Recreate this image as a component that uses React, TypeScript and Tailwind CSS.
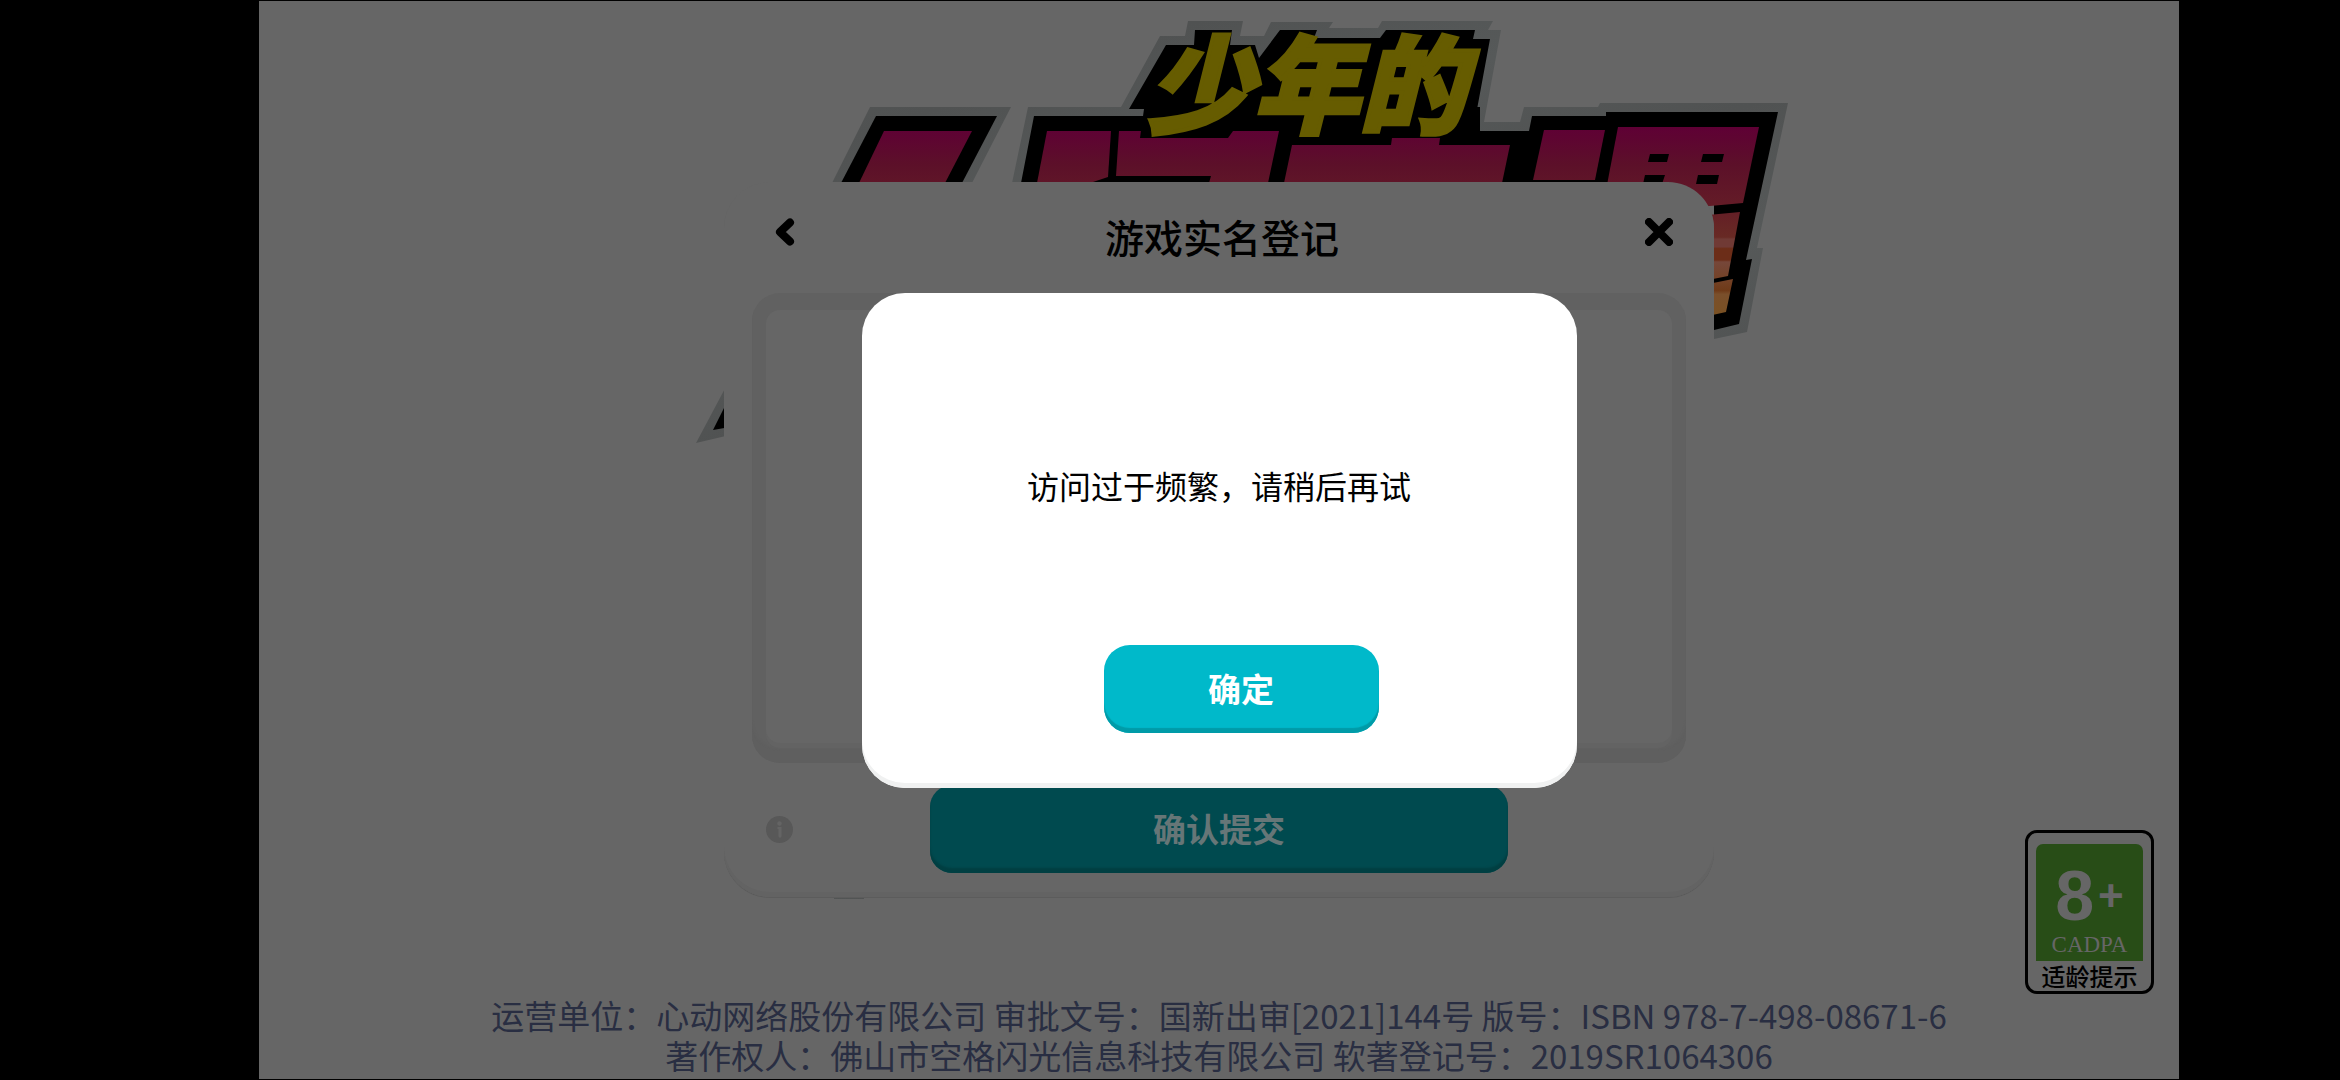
import React from "react";

const CJK = "font-['Noto_Sans_CJK_SC',sans-serif]";

function GameLogo() {
  return (
    <svg
      aria-label="少年的人间奇遇"
      role="img"
      viewBox="619 0 1200 920"
      className="absolute top-0 left-1/2 -ml-[600px] h-[920px] w-[1200px]"
    >
      <defs>
        <linearGradient id="rim" gradientUnits="userSpaceOnUse" x1="0" y1="20" x2="40" y2="140" spreadMethod="reflect">
          <stop offset="0" stopColor="#565959" />
          <stop offset="1" stopColor="#505252" />
        </linearGradient>
        <linearGradient id="sunset" gradientUnits="userSpaceOnUse" x1="0" y1="126" x2="0" y2="316">
          <stop offset="0" stopColor="#5f0035" />
          <stop offset="0.2" stopColor="#5c1029" />
          <stop offset="0.4" stopColor="#631b27" />
          <stop offset="0.58" stopColor="#682a24" />
          <stop offset="0.59" stopColor="#703a35" />
          <stop offset="0.63" stopColor="#703a35" />
          <stop offset="0.64" stopColor="#6c2d18" />
          <stop offset="0.7" stopColor="#6c2d18" />
          <stop offset="0.71" stopColor="#76473a" />
          <stop offset="0.8" stopColor="#744227" />
          <stop offset="0.86" stopColor="#6f3a18" />
          <stop offset="0.88" stopColor="#7a4f2b" />
          <stop offset="1" stopColor="#7a5122" />
        </linearGradient>
      </defs>

      {/* rim */}
      <g fill="url(#rim)">
        <path d="M870 106H1011L972 182H832Z" />
        <path d="M1028 106H1121L1160 35H1185L1188 20H1243L1240 35H1264L1271 21H1333L1329 27H1378L1382 20H1493L1488 29H1501L1484 121H1520L1524 106H1598L1600 102H1788L1757 247H1763L1747 331L1714 338V182H1012Z" />
        <path d="M730 378L696 442L730 434Z" />
        <path d="M834 890H864V898H834Z" />
      </g>

      {/* black backing */}
      <g fill="#000">
        <path d="M876 115H997L962 182H841Z" />
        <path d="M1034 115H1144L1150 106H1480V130H1529L1532 115H1606V111H1778L1746 259L1752 258L1739 323L1714 329V182H1021Z" />
        <path d="M730 395L713 429L730 426Z" />
      </g>

      {/* gradient slabs */}
      <g fill="url(#sunset)">
        <path d="M884 130H972L945 182H859Z" />
        <path d="M1047 130H1111L1108 176L1090 182H1037Z" />
        <path d="M1119 130H1279L1268 182H1209L1211 175H1116Z" />
        <path d="M1292 144H1391L1392 137H1440L1439 144H1510L1502 182H1284Z" />
        <path d="M1544 129H1605L1595 179H1533Z" />
        <path d="M1618 126H1759L1743 202L1710 205H1603Z" />
        <path d="M1708 214L1740 211L1728 275L1708 279Z" />
        <path d="M1708 283L1733 278L1726 311L1708 315Z" />
      </g>
      <g fill="#000">
        <path d="M1650 153H1669L1667 161H1648Z" />
        <path d="M1703 153H1724L1722 161H1701Z" />
        <path d="M1645 174H1665L1662 183H1643Z" />
        <path d="M1698 174H1719L1717 183H1696Z" />
        {/* plate behind the small title */}
        <path d="M1129 108L1166 44H1194L1195 29H1232L1230 44H1255L1259 57L1280 29H1317L1314 37H1380L1386 29H1475L1473 38H1490L1473 130H1233L1228 137H1140L1144 108Z" />
      </g>

      <text
        x="1306"
        y="124"
        textAnchor="middle"
        fontSize="106"
        fontWeight="900"
        fontStyle="italic"
        fill="#665c00"
        stroke="#665c00"
        strokeWidth="4"
        fontFamily="'Noto Sans CJK SC', sans-serif"
      >
        少年的
      </text>
    </svg>
  );
}

function RegistrationPanel() {
  return (
    <section
      aria-label="游戏实名登记"
      className="relative mt-[181px] w-[990px] max-w-full rounded-[46px] bg-[#666666] pb-6 shadow-[inset_0_-5px_0_#636363,0_1px_0_#5c5c5c]"
    >
      <header className="grid h-[111px] grid-cols-[1fr_auto_1fr] items-start pr-[25px] pl-[31px]">
        <button type="button" aria-label="返回" className="flex h-[100px] w-[60px] items-center justify-center">
          <svg viewBox="0 0 20 28" className="h-7 w-5" fill="none" stroke="#000" strokeWidth="8" strokeLinecap="round" strokeLinejoin="round">
            <path d="M15 4.500L5 14L15 23.500" />
          </svg>
        </button>
        <h1 className="text-[39px] leading-[108px] font-medium text-black">游戏实名登记</h1>
        <button type="button" aria-label="关闭" className="flex h-[100px] w-[60px] items-center justify-center justify-self-end">
          <svg viewBox="0 0 28 28" className="size-7" fill="none" stroke="#000" strokeWidth="8" strokeLinecap="round">
            <path d="M4 4L24 24M24 4L4 24" />
          </svg>
        </button>
      </header>

      <div className="mx-7 rounded-[28px] bg-[#616161] px-[14px] pt-[17px] pb-5 shadow-[inset_0_-14px_2px_#5f5f5f]">
        <div className="h-[433px] rounded-[14px] bg-[#666666] shadow-[0_5px_0_#636363]" />
      </div>

      <div className="mt-[22px] grid grid-cols-[1fr_578px_1fr] items-center">
        <svg aria-hidden="true" viewBox="0 0 27 27" className="ml-[42px] size-[27px]">
          <circle cx="13.500" cy="13.500" r="13.500" fill="#585858" />
          <circle cx="13.500" cy="7.500" r="2.200" fill="#646464" />
          <path d="M11.500 11H15.500V20.500L14 22L12.500 20.500V13H11.500Z" fill="#646464" />
        </svg>
        <button
          type="button"
          className="h-[88px] rounded-[22px] bg-[#004a4f] text-[33px] font-bold text-[#667677] shadow-[inset_0_-5px_2px_#003f42]"
        >
          确认提交
        </button>
      </div>
    </section>
  );
}

function AgeBadge() {
  return (
    <aside
      aria-label="适龄提示"
      className="absolute right-[25px] bottom-[85px] flex w-[129px] flex-col items-center rounded-[12px] border-[3px] border-black pt-[11px]"
    >
      <div className="flex w-[107px] flex-col items-center rounded-t-[7px] bg-[#284d17] text-[#666666]">
        <div className="flex h-[87px] items-center gap-1 pt-4 font-['Liberation_Sans',sans-serif] font-bold">
          <span className="text-[70px] leading-[70px]">8</span>
          <span className="text-[44px] leading-[60px]">+</span>
        </div>
        <div className="h-[30px] font-['Liberation_Serif',serif] text-[23px] leading-[27px]">CADPA</div>
      </div>
      <div className="text-[24px] leading-[30px] font-medium text-black">适龄提示</div>
    </aside>
  );
}

function NoticeDialog() {
  return (
    <div className="absolute inset-0 flex items-center justify-center">
      <div
        role="alertdialog"
        aria-modal="true"
        aria-labelledby="notice"
        className="flex w-[715px] flex-col items-center rounded-[43px] bg-white pb-[55px] shadow-[inset_0_-5px_0_#f0f1f1]"
      >
        <p id="notice" className="pt-[168px] pb-[136px] text-[32px] leading-[48px] text-black">
          访问过于频繁，请稍后再试
        </p>
        <button
          type="button"
          className="ml-[44px] h-[88px] w-[275px] rounded-[26px] bg-[#00b9ca] text-[33px] font-bold text-white shadow-[inset_0_-5px_1px_#009ba8]"
        >
          确定
        </button>
      </div>
    </div>
  );
}

export default function App() {
  return (
    <div lang="zh-CN" className={`flex min-h-screen bg-black py-px pr-[161px] pl-[259px] ${CJK}`}>
      <main className="relative flex min-w-0 flex-1 flex-col items-center overflow-hidden bg-[#666666]">
        <GameLogo />
        <RegistrationPanel />
        <footer className="mt-[98px] pb-1 text-center text-[33px] leading-[40px] text-[#292e42]">
          <p>运营单位：心动网络股份有限公司 审批文号：国新出审[2021]144号 版号：ISBN 978-7-498-08671-6</p>
          <p>著作权人：佛山市空格闪光信息科技有限公司 软著登记号：2019SR1064306</p>
        </footer>
        <AgeBadge />
        <NoticeDialog />
      </main>
    </div>
  );
}
